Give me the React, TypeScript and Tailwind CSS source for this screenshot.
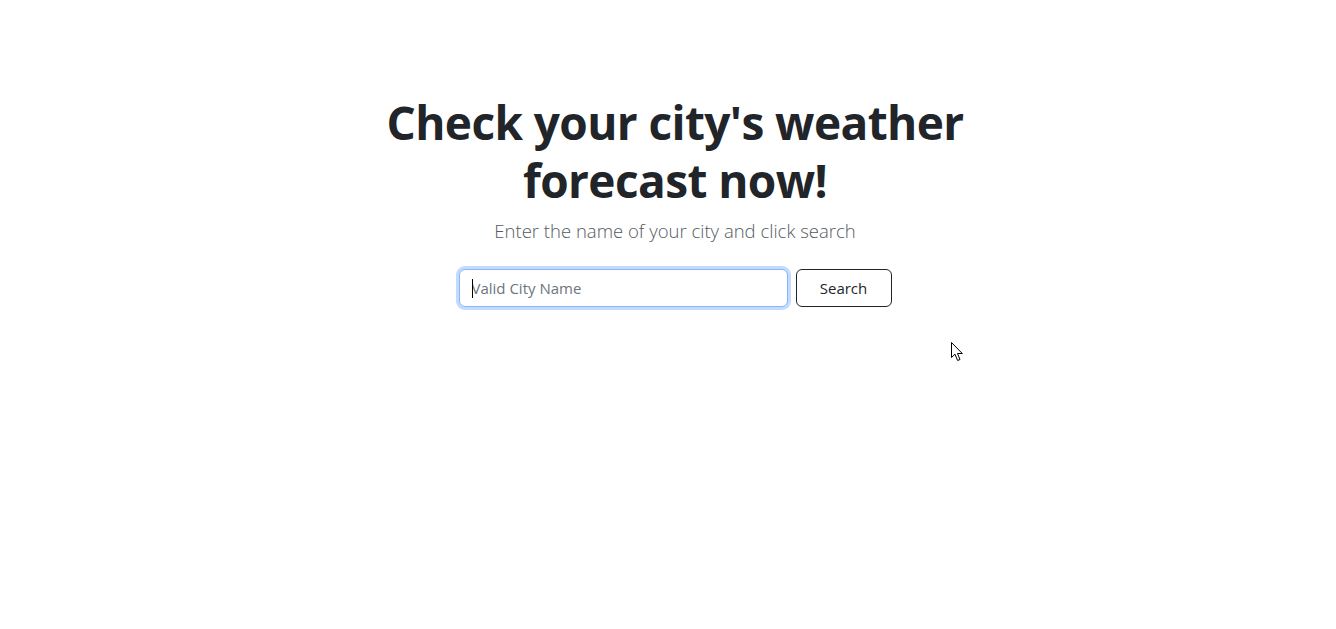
import React from "react";

const Cursor = () => (
  <svg
    width="14"
    height="21"
    viewBox="0 0 14 21"
    className="absolute left-[951px] top-[342px]"
  >
    <path
      d="M0.5 0.5 L0.5 15.5 L4 12.2 L6.6 18.5 L9 17.5 L6.5 11.5 L11.3 11.5 Z"
      fill="#fff"
      stroke="#000"
      strokeWidth="1"
      strokeLinejoin="round"
    />
  </svg>
);

export default function App() {
  return (
    <div
      className="relative min-h-[629px] w-full bg-white text-[#212529]"
      style={{ fontFamily: '"Open Sans", "Noto Sans", sans-serif' }}
    >
      <main className="flex flex-col items-center pl-[14px] pt-[93px]">
        {/* Heading */}
        <h1 className="w-[620px] text-center text-[46px] font-bold leading-[58px] tracking-[-0.6px] mb-[7px]">
          Check your city's weather forecast now!
        </h1>
        <p className="text-[18.5px] font-light leading-[30px] text-[#555b61] mb-[23px]">
          Enter the name of your city and click search
        </p>

        {/* Search form */}
        <form className="flex items-center gap-2" onSubmit={(e) => e.preventDefault()}>
          <div className="relative">
            <input
              type="text"
              placeholder="Valid City Name"
              className="block h-[38px] w-[329px] rounded-[6px] border border-[#86b7fe] bg-white px-3 text-[15px] text-[#212529] placeholder:text-[#6c757d] outline-none shadow-[0_0_0_3px_rgba(13,110,253,0.25)]"
            />
            <span className="absolute left-[13px] top-[10px] h-[19px] w-px bg-black" />
          </div>
          <button
            type="submit"
            className="h-[38px] w-[96px] rounded-[6px] border border-[#212529] bg-white text-[15px] text-[#212529]"
          >
            Search
          </button>
        </form>
      </main>
      <Cursor />
    </div>
  );
}
